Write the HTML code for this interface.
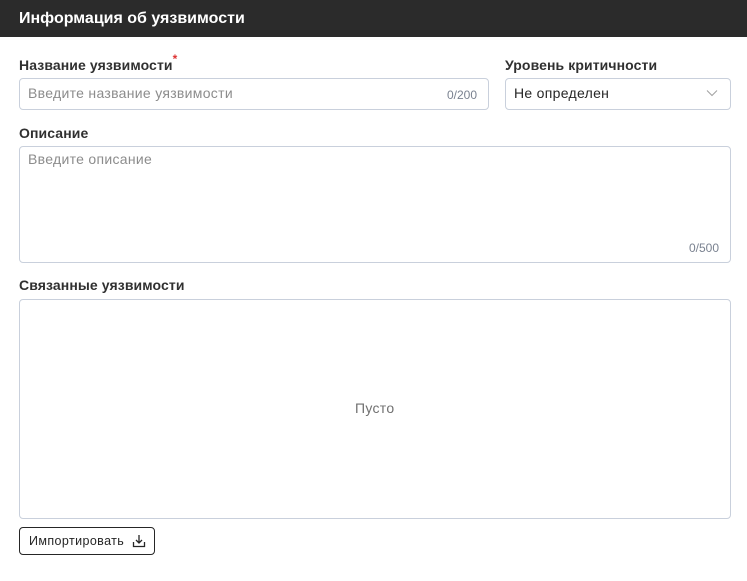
<!DOCTYPE html>
<html><head><meta charset="utf-8"><style>
*{box-sizing:border-box;margin:0;padding:0}
body{width:747px;height:581px;background:#fff;font-family:"Liberation Sans",sans-serif;position:relative;overflow:hidden;color:#262626}
.hdr{position:absolute;left:0;top:0;width:747px;height:37px;background:#2b2b2b;color:#fff;font-weight:bold;font-size:16px;line-height:37px;padding-left:19px}
.lbl{position:absolute;font-size:14px;font-weight:bold;color:#303030;letter-spacing:0.1px}
.box{position:absolute;border:1px solid #c9d0dc;border-radius:4px;background:#fff}
.ph{position:absolute;font-size:14px;color:#8c8c8c;letter-spacing:0.3px}
.cnt{position:absolute;font-size:12px;color:#7a8290}
</style></head><body>
<div class="hdr">Информация об уязвимости</div>
<div class="lbl" style="left:19px;top:57px">Название уязвимости<span style="color:#d33;font-size:12px;position:relative;top:-7px">*</span></div>
<div class="box" style="left:19px;top:78px;width:470px;height:32px"></div>
<div class="ph" style="left:28px;top:85px">Введите название уязвимости</div>
<div class="cnt" style="left:447px;top:88px">0/200</div>
<div class="lbl" style="left:505px;top:57px">Уровень критичности</div>
<div class="box" style="left:505px;top:78px;width:226px;height:32px"></div>
<div class="ph" style="left:514px;top:85px;color:#262626">Не определен</div>
<svg style="position:absolute;left:706px;top:89px" width="12" height="8"><path d="M1 1.5L6 6.5L11 1.5" fill="none" stroke="#a0a0a0" stroke-width="1"/></svg>
<div class="lbl" style="left:19px;top:125px">Описание</div>
<div class="box" style="left:19px;top:146px;width:712px;height:117px"></div>
<div class="ph" style="left:28px;top:151px">Введите описание</div>
<div class="cnt" style="left:689px;top:241px">0/500</div>
<div class="lbl" style="left:19px;top:277px">Связанные уязвимости</div>
<div class="box" style="left:19px;top:299px;width:712px;height:220px"></div>
<div class="ph" style="left:355px;top:400px;color:#707070">Пусто</div>
<div style="position:absolute;left:19px;top:527px;width:136px;height:28px;border:1px solid #262626;border-radius:4px;font-size:12.5px;letter-spacing:0.4px;line-height:26px;padding-left:9px;color:#262626">Импортировать
<svg style="position:absolute;left:112px;top:6px" width="14" height="14" viewBox="0 0 14 14"><path d="M7 1V9M4 6L7 9L10 6M1.5 8V12.5H12.5V8" fill="none" stroke="#262626" stroke-width="1.3"/></svg></div>
</body></html>
